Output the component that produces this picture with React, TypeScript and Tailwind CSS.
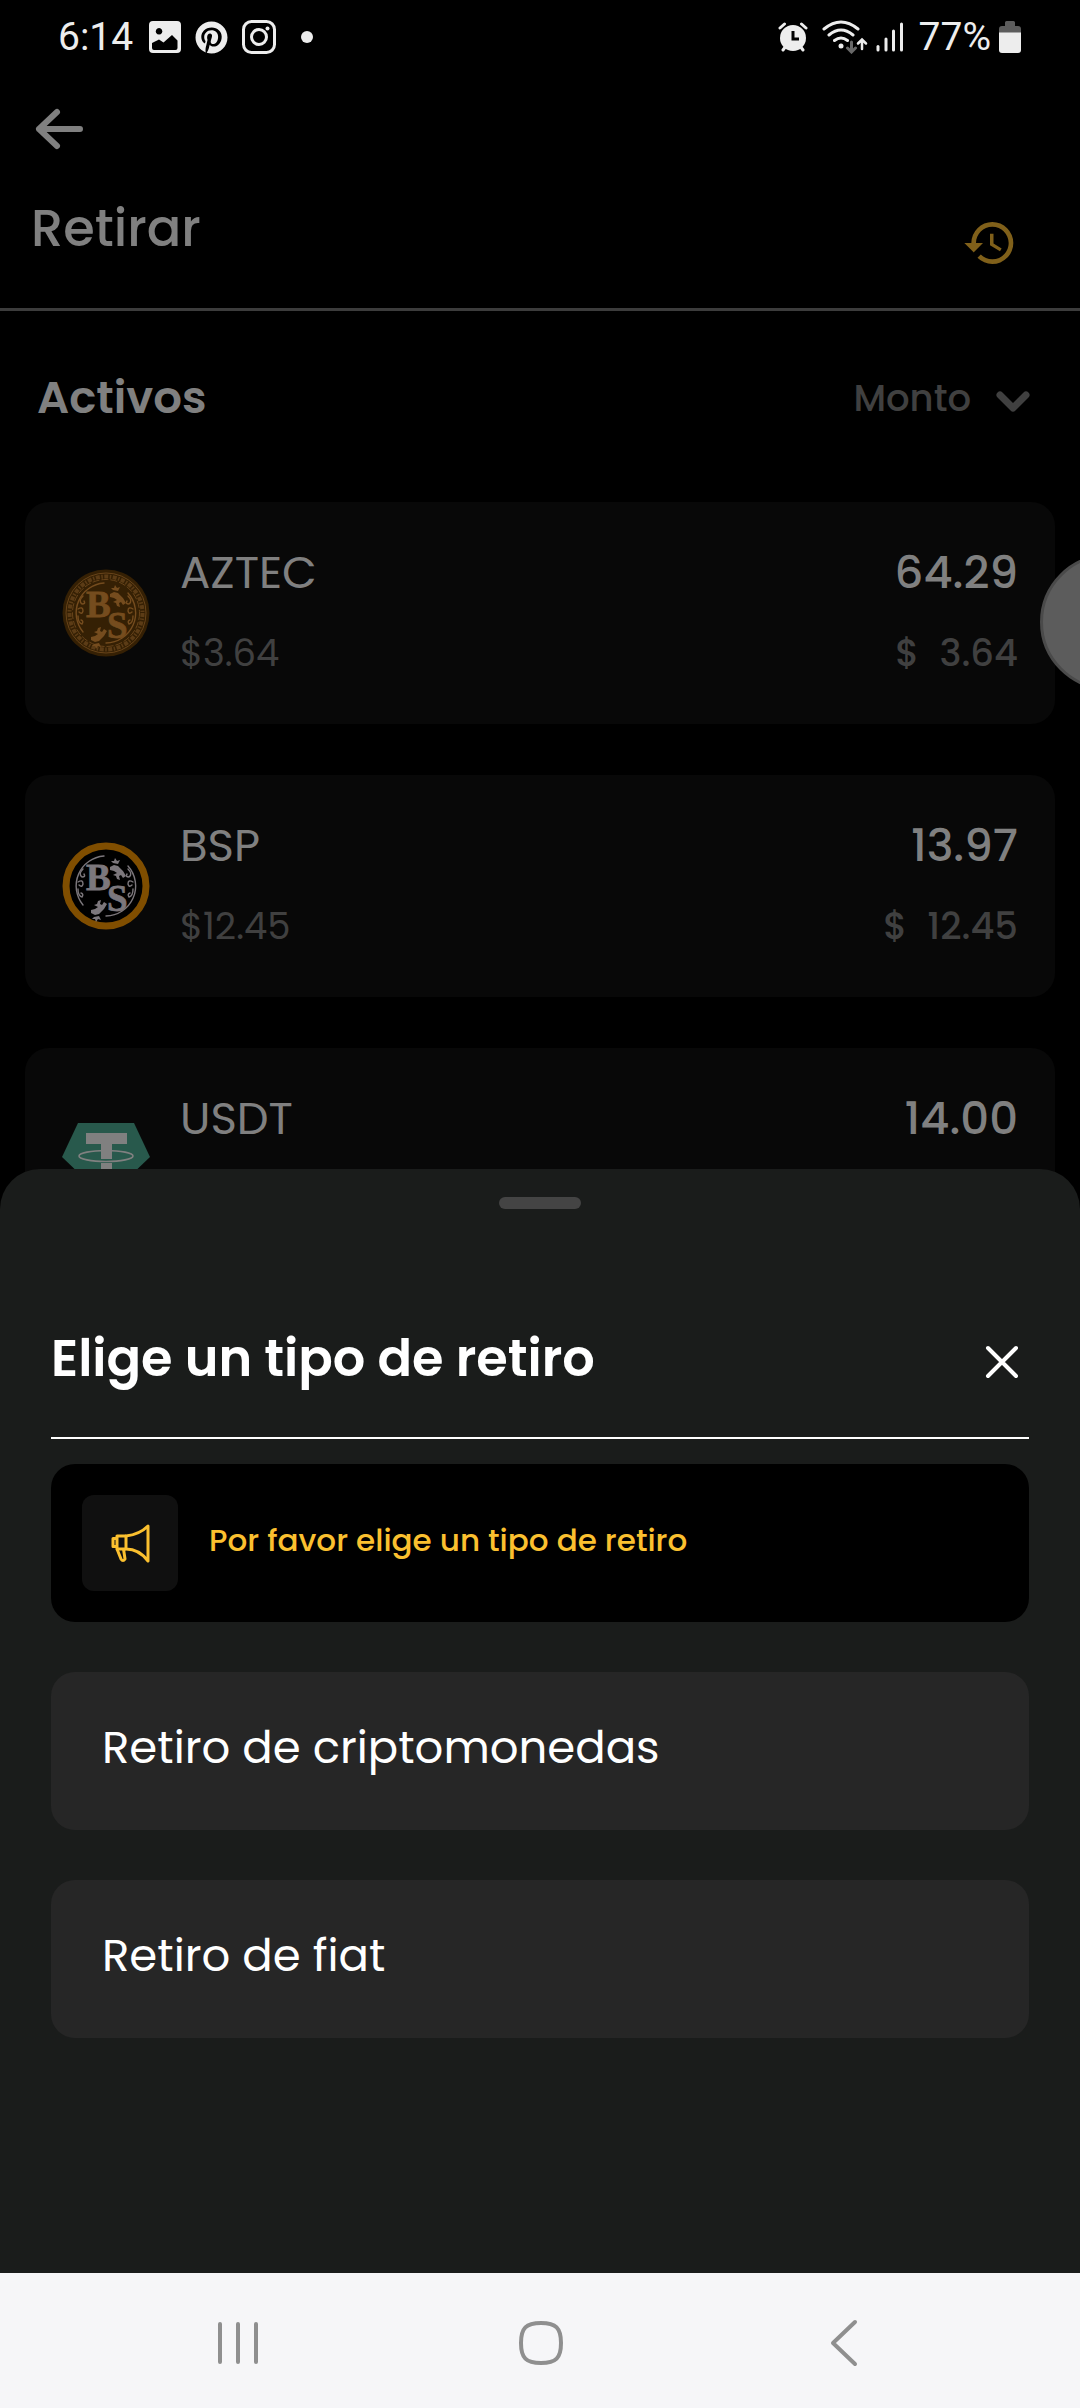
import React from "react";
import { MdHistory } from "react-icons/md";
import { FaPinterest } from "react-icons/fa";

type Asset = {
  symbol: string;
  price: string;
  amount: string;
  value: string;
  logo: React.ReactNode;
};

function Frog() {
  return (
    <g>
      <path d="M0 3 L4 1 L8 2 L13 7 L16 12 L13 14 L11 11 L9 12 L10 16 L7 15 L6 12 L3 11 L7 9 L4 7 L0 6 Z" />
      <path d="M3 -1 L1 -3 L4 -3 L5 -6 L7 -3 L10 -4 L8 0 Z" />
    </g>
  );
}

function CoinArt({ color }: { color: string }) {
  return (
    <g fill={color}>
      <g stroke={color} strokeWidth="0.8" fontSize="37" fontWeight="700" fontFamily="Liberation Serif, serif">
        <text x="24" y="48">B</text>
        <text x="45" y="69">S</text>
      </g>
      <g transform="translate(48 22)"><Frog /></g>
      <g transform="translate(29 74) scale(1 -1)"><Frog /></g>
      <g fill="none" stroke={color} strokeWidth="1.4" strokeLinecap="round">
        <path d="M42 14 A30 30 0 0 0 21 63" />
        <path d="M66 24 A30 30 0 0 1 44 74" />
        <path d="M21 27 q-5 5 -1 8 q4 0 2 -3 M16 40 q5 -3 5 2 q-1 4 -4 1 M16 47 q0 7 4 8 q2 -3 -1 -4" />
        <path d="M66 27 q5 5 1 8 q-4 0 -2 -3 M71 40 q-5 -3 -5 2 q1 4 4 1 M71 47 q0 7 -4 8 q-2 -3 1 -4" />
      </g>
    </g>
  );
}

function AztecLogo() {
  return (
    <svg viewBox="0 0 88 88" className="size-22" aria-hidden="true">
      <circle cx="44" cy="44" r="43.5" fill="#352004" />
      <circle cx="44" cy="44" r="40" fill="none" stroke="#68441a" strokeWidth="1" />
      <circle cx="44" cy="44" r="36.5" fill="none" stroke="#5c3c16" strokeWidth="4" strokeDasharray="4 1.5 1.5 1.5" />
      <circle cx="44" cy="44" r="33.5" fill="none" stroke="#68441a" strokeWidth="1" strokeDasharray="7 2" />
      <CoinArt color="#754c1e" />
    </svg>
  );
}

function BspLogo() {
  return (
    <svg viewBox="0 0 88 88" className="size-22" aria-hidden="true">
      <circle cx="44" cy="44" r="40" fill="#000" stroke="#804e00" strokeWidth="7" />
      <CoinArt color="#7c777c" />
    </svg>
  );
}

function TetherLogo() {
  return (
    <svg viewBox="0 0 88 88" className="size-22" aria-hidden="true">
      <path d="M16 8 H72 L88 42 L44 84 L0 42 Z" fill="#28594c" />
      <ellipse cx="44" cy="41" rx="27" ry="5.5" fill="none" stroke="#808080" strokeWidth="1.6" />
      <path d="M24 18 H65 V29 H50 V44 H39 V29 H24 Z M39 48 H50 V66 H39 Z" fill="#808080" />
    </svg>
  );
}

const assets: Asset[] = [
  { symbol: "AZTEC", price: "$3.64", amount: "64.29", value: "3.64", logo: <AztecLogo /> },
  { symbol: "BSP", price: "$12.45", amount: "13.97", value: "12.45", logo: <BspLogo /> },
  { symbol: "USDT", price: "$1.00", amount: "14.00", value: "14.00", logo: <TetherLogo /> },
];

function StatusBar() {
  return (
    <div className="flex h-[74px] items-center justify-between pr-[59px] pl-[58px] font-[Roboto,sans-serif] text-[39px] leading-none text-[#ededed]">
      <div className="flex items-center">
        <span>6:14</span>
        <svg viewBox="0 0 32 32" className="ml-4 size-8" aria-hidden="true">
          <path
            fillRule="evenodd"
            fill="currentColor"
            d="M4 0H28a4 4 0 0 1 4 4V28a4 4 0 0 1-4 4H4a4 4 0 0 1-4-4V4a4 4 0 0 1 4-4Z M10 7a3.3 3.3 0 1 0 .1 0Z M3 22L10 18.500 14.500 21.500 23 14 28.500 19.500V27a2 2 0 0 1-2 2H5a2 2 0 0 1-2-2Z"
          />
        </svg>
        <FaPinterest className="ml-[14px] size-[33px]" aria-hidden="true" />
        <svg viewBox="0 0 34 34" className="ml-[14px] size-[34px]" fill="none" stroke="currentColor" aria-hidden="true">
          <rect x="1.500" y="1.500" width="31" height="31" rx="8" strokeWidth="3" />
          <circle cx="17" cy="17" r="7.500" strokeWidth="3" />
          <circle cx="25.500" cy="8.500" r="2" fill="currentColor" stroke="none" />
        </svg>
        <span className="ml-[25px] size-3 rounded-full bg-[#ededed]" />
      </div>
      <div className="flex items-center">
        <svg viewBox="0 0 30 30" className="size-[30px]" aria-hidden="true">
          <circle cx="15" cy="16" r="13" fill="currentColor" />
          <path d="M2 6 L6.500 2 M28 6 L23.500 2 M5 28 L8 24 M25 28 L22 24" stroke="currentColor" strokeWidth="3" strokeLinecap="round" />
          <path d="M15 9 V17 H21" fill="none" stroke="#000" strokeWidth="3" />
        </svg>
        <svg viewBox="0 0 46 34" className="ml-[14px] h-[34px] w-[46px]" fill="none" stroke="currentColor" strokeWidth="3" strokeLinecap="round" aria-hidden="true">
          <path d="M2 9 Q19 -5 36 9 M7 15 Q19 5 31 15 M12.500 20.500 Q19 15.500 25.500 20.500" />
          <circle cx="19" cy="26" r="2.500" fill="currentColor" stroke="none" />
          <path d="M29.500 22 V31 M25.500 28 L29.500 32 L33.500 28" stroke="#686868" />
          <path d="M40 29 V20 M36 23.500 L40 19.500 L44 23.500" strokeWidth="2.500" />
        </svg>
        <svg viewBox="0 0 28 30" className="ml-2 h-[30px] w-7" stroke="currentColor" strokeWidth="3" strokeLinecap="round" aria-hidden="true">
          <path d="M2 24.500 V28" />
          <path d="M10 17 V28" />
          <path d="M17.500 9 V28" />
          <path d="M25.500 2 V28" />
        </svg>
        <span className="ml-[15px]">77%</span>
        <svg viewBox="0 0 22 32" className="ml-2 h-8 w-[22px]" aria-hidden="true">
          <path d="M6 1.500 a1.500 1.500 0 0 1 1.500-1.500 h7 a1.500 1.500 0 0 1 1.500 1.500 V5 h3 a3 3 0 0 1 3 3 V12 H0 V8 a3 3 0 0 1 3-3 h3 Z" fill="#5c5c5c" />
          <path d="M0 11.500 H22 V29 a3 3 0 0 1-3 3 H3 a3 3 0 0 1-3-3 Z" fill="currentColor" />
        </svg>
      </div>
    </div>
  );
}

function AssetRow({ asset }: { asset: Asset }) {
  return (
    <li className="flex h-[222px] items-center rounded-3xl bg-[#080808] px-[37px]">
      {asset.logo}
      <div className="ml-[30px] flex flex-1 flex-col gap-5">
        <span className="text-[45px] leading-[60px] text-[#808080]">{asset.symbol}</span>
        <span className="text-[37px] leading-[60px] text-[#404040]">{asset.price}</span>
      </div>
      <div className="flex flex-col items-end gap-5 font-medium">
        <span className="text-[45px] leading-[60px] text-[#808080]">{asset.amount}</span>
        <span className="flex gap-5 text-[37px] leading-[60px] text-[#404040]">
          <span>$</span>
          <span>{asset.value}</span>
        </span>
      </div>
    </li>
  );
}

function OptionButton({ children }: { children: React.ReactNode }) {
  return (
    <button type="button" className="h-[158px] w-full rounded-3xl bg-[#262626] px-[51px] pb-[6px] text-left text-[45px] leading-[60px] text-white">
      {children}
    </button>
  );
}

function WithdrawSheet() {
  return (
    <section role="dialog" aria-labelledby="sheet-title" className="absolute inset-x-0 bottom-0 rounded-t-[40px] bg-[#1a1c1b] px-[51px] pt-7 pb-[235px]">
      <div className="mx-auto h-3 w-[82px] rounded-full bg-[#444444]" />
      <header className="mt-[114px] flex items-center justify-between border-b-2 border-white pb-[44px]">
        <h2 id="sheet-title" className="text-[51px] leading-[70px] font-semibold text-white">Elige un tipo de retiro</h2>
        <button type="button" aria-label="Cerrar" className="mt-2 mr-[10px] text-white">
          <svg viewBox="0 0 34 34" className="size-[34px]" stroke="currentColor" strokeWidth="4" strokeLinecap="round" aria-hidden="true">
            <path d="M3 3 L31 31 M31 3 L3 31" />
          </svg>
        </button>
      </header>
      <div className="mt-[25px] flex h-[158px] items-center rounded-3xl bg-black px-[31px]">
        <div className="flex size-24 items-center justify-center rounded-xl bg-[#101010]">
          <svg viewBox="0 0 40 40" className="size-10" fill="none" stroke="#fbc02f" strokeWidth="3" strokeLinejoin="round" aria-hidden="true">
            <path d="M38 3 C32 9 25 12 16 13 V26 C25 26 32 30 38 38 Z" />
            <path d="M16 13 H7 V26 H16 M7 15.500 H3 V23.500 H7" />
            <path d="M7 26 L11 36 Q13 39 15 36 L13.500 26" />
          </svg>
        </div>
        <p className="ml-[31px] pb-[6px] text-[31px] leading-[44px] font-medium text-[#fbc02f]">Por favor elige un tipo de retiro</p>
      </div>
      <div className="mt-[50px] flex flex-col gap-[50px]">
        <OptionButton>Retiro de criptomonedas</OptionButton>
        <OptionButton>Retiro de fiat</OptionButton>
      </div>
    </section>
  );
}

function NavigationBar() {
  return (
    <nav aria-label="Sistema" className="grid h-[135px] grid-cols-3 place-items-center bg-[#f6f6f8] pt-[5px] pr-[85px] pl-[87px] text-[#8f8f8f]">
      <button type="button" aria-label="Recientes">
        <svg viewBox="0 0 48 48" className="size-12" stroke="currentColor" strokeWidth="4" strokeLinecap="round" aria-hidden="true">
          <path d="M6 5 V43 M24 5 V43 M42 5 V43" />
        </svg>
      </button>
      <button type="button" aria-label="Inicio">
        <svg viewBox="0 0 48 48" className="size-12" fill="none" stroke="currentColor" strokeWidth="4" aria-hidden="true">
          <path d="M24 4 C39 4 44 9 44 24 S39 44 24 44 S4 39 4 24 S9 4 24 4 Z" />
        </svg>
      </button>
      <button type="button" aria-label="Atrás">
        <svg viewBox="0 0 48 48" className="size-12" fill="none" stroke="currentColor" strokeWidth="4" strokeLinecap="round" strokeLinejoin="round" aria-hidden="true">
          <path d="M35 3 L13 24 L35 45" />
        </svg>
      </button>
    </nav>
  );
}

export default function App() {
  return (
    <div className="flex min-h-screen flex-col bg-black font-[Poppins,Inter,sans-serif]">
      <div className="relative flex-1 overflow-hidden">
        <StatusBar />
        <header className="border-b-[3px] border-[#3c3c3c] pr-[62px] pb-[37px] pl-[31px]">
          <button type="button" aria-label="Volver" className="mt-[30px] block text-[#808080]">
            <svg viewBox="0 0 56 50" className="h-[50px] w-14" fill="none" stroke="currentColor" strokeWidth="6" strokeLinecap="round" strokeLinejoin="round" aria-hidden="true">
              <path d="M49 25 H8 M26 8 L8 25 L26 42" />
            </svg>
          </button>
          <div className="mt-[39px] flex items-end justify-between">
            <h1 className="pb-2 text-[51px] leading-[70px] font-medium text-[#808080]">Retirar</h1>
            <button type="button" aria-label="Historial" className="text-[#80601a]">
              <MdHistory className="size-14" />
            </button>
          </div>
        </header>
        <main>
          <div className="flex items-center justify-between pt-[52px] pr-[49px] pl-[37px]">
            <h2 className="text-[45px] leading-[70px] font-semibold text-[#808080]">Activos</h2>
            <button type="button" className="flex items-center gap-6 text-[37px] leading-[60px] font-medium text-[#404040]">
              Monto
              <svg viewBox="0 0 36 24" className="mt-2 h-6 w-9" fill="none" stroke="currentColor" strokeWidth="7" strokeLinecap="round" strokeLinejoin="round" aria-hidden="true">
                <path d="M5 5 L18 18 L31 5" />
              </svg>
            </button>
          </div>
          <ul className="mt-[69px] flex flex-col gap-[51px] px-[25px]">
            {assets.map((asset) => (
              <AssetRow key={asset.symbol} asset={asset} />
            ))}
          </ul>
        </main>
        <button type="button" aria-label="Asistente" className="absolute top-[554px] -right-24 size-[136px] rounded-full border-[3px] border-[#4a4a4a] bg-[#5c5c5c]" />
        <WithdrawSheet />
      </div>
      <NavigationBar />
    </div>
  );
}
